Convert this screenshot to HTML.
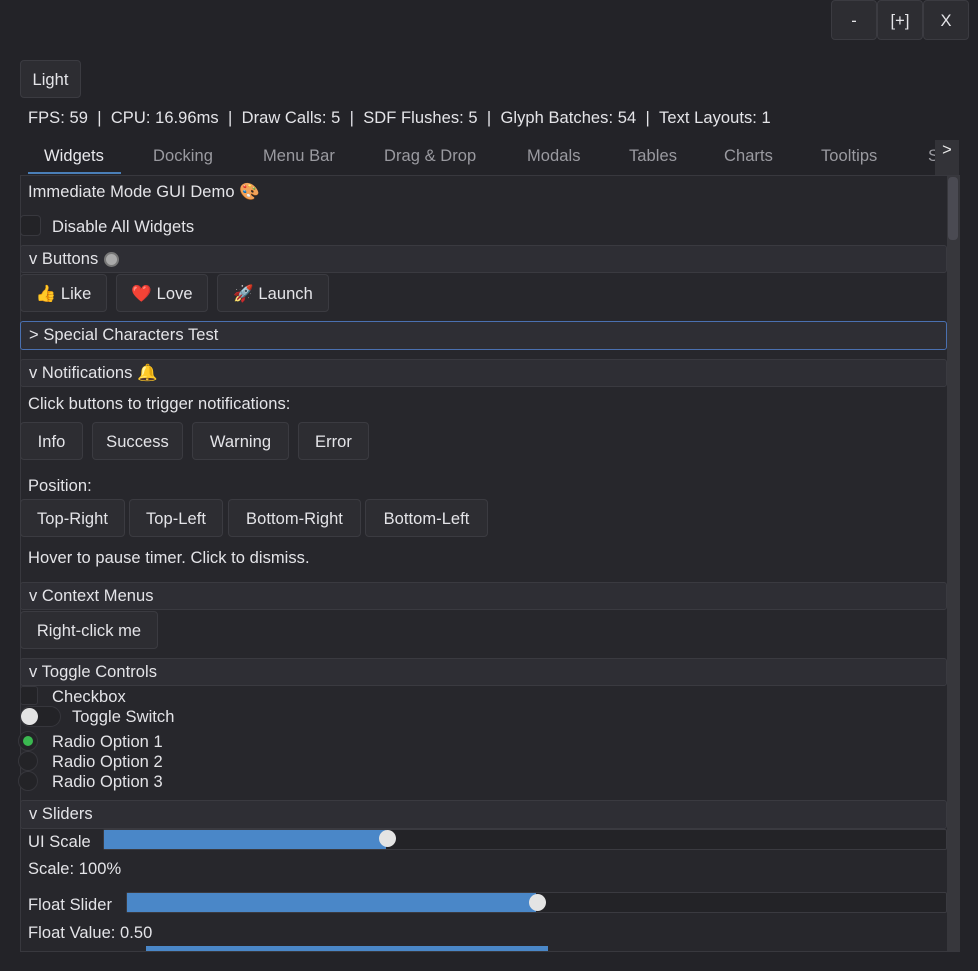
<!DOCTYPE html>
<html><head><meta charset="utf-8"><style>
*{box-sizing:border-box;margin:0;padding:0}
body{width:978px;height:971px;background:#232328;font-family:"Liberation Sans","DejaVu Sans",sans-serif;font-size:16.5px;letter-spacing:0.05px;color:#e4e4e8;position:relative;overflow:hidden}
.a{position:absolute;white-space:nowrap}
.btn{position:absolute;background:#2d2d32;border:1px solid #3b3b41;border-radius:4px;display:flex;align-items:center;justify-content:center;color:#e4e4e8;padding-top:2px}
.t{position:absolute;white-space:nowrap;line-height:20px;margin-top:1px}
.hdr{position:absolute;left:20px;width:927px;background:#2e2e34;border:1px solid #3a3a40;border-radius:3px;padding-left:8px;display:flex;align-items:center}
.tab{position:absolute;top:146px;color:#9a9aa0;line-height:20px}
.circ{position:absolute;width:20px;height:20px;border-radius:50%;border:1px solid #36363c;background:#232327}
.trk{position:absolute;background:#232327;border:1px solid #3a3a40;border-radius:2px}
.fill{position:absolute;background:#4a87c8}
.knob{position:absolute;width:17px;height:17px;border-radius:50%;background:#e4e4e4}
</style></head><body>
<div class="btn" style="left:831px;top:0;width:46px;height:40px">-</div>
<div class="btn" style="left:877px;top:0;width:46px;height:40px">[+]</div>
<div class="btn" style="left:923px;top:0;width:46px;height:40px">X</div>
<div class="btn" style="left:20px;top:60px;width:61px;height:38px">Light</div>
<div class="t" style="left:28px;top:107px">FPS: 59 &nbsp;| &nbsp;CPU: 16.96ms &nbsp;| &nbsp;Draw Calls: 5 &nbsp;| &nbsp;SDF Flushes: 5 &nbsp;| &nbsp;Glyph Batches: 54 &nbsp;| &nbsp;Text Layouts: 1</div>
<div class="tab" style="left:44px;color:#e8e8ec">Widgets</div>
<div class="a" style="left:28px;top:172px;width:93px;height:2px;background:#4a7fb8"></div>
<div class="tab" style="left:153px">Docking</div>
<div class="tab" style="left:263px">Menu Bar</div>
<div class="tab" style="left:384px">Drag &amp; Drop</div>
<div class="tab" style="left:527px">Modals</div>
<div class="tab" style="left:629px">Tables</div>
<div class="tab" style="left:724px">Charts</div>
<div class="tab" style="left:821px">Tooltips</div>
<div class="tab" style="left:928px">S</div>
<div class="a" style="left:935px;top:140px;width:24px;height:36px;background:#333338;color:#e8e8e8;text-align:center;line-height:20px">&gt;</div>
<div class="a" style="left:20px;top:175px;width:940px;height:777px;background:#27272c;border:1px solid #38383e"></div>
<div class="a" style="left:947px;top:176px;width:13px;height:775px;background:#37373c"></div>
<div class="a" style="left:948px;top:177px;width:10px;height:63px;background:#4a4a52;border-radius:4px"></div>
<div class="t" style="left:28px;top:181px">Immediate Mode GUI Demo 🎨</div>
<div class="a" style="left:20px;top:215px;width:21px;height:21px;border:1px solid #38383e;border-radius:4px;background:#232327"></div>
<div class="t" style="left:52px;top:216px">Disable All Widgets</div>
<div class="hdr" style="top:245px;height:28px">v Buttons <span style="display:inline-block;width:15px;height:15px;border-radius:50%;background:#aaa;border:2px solid #777;margin-left:6px"></span></div>
<div class="btn" style="left:20px;top:274px;width:87px;height:38px">👍 Like</div>
<div class="btn" style="left:116px;top:274px;width:92px;height:38px">❤️ Love</div>
<div class="btn" style="left:217px;top:274px;width:112px;height:38px">🚀 Launch</div>
<div class="hdr" style="top:321px;height:29px;border-color:#4a70b0">&gt; Special Characters Test</div>
<div class="hdr" style="top:359px;height:28px">v Notifications 🔔</div>
<div class="t" style="left:28px;top:393px">Click buttons to trigger notifications:</div>
<div class="btn" style="left:20px;top:422px;width:63px;height:38px">Info</div>
<div class="btn" style="left:92px;top:422px;width:91px;height:38px">Success</div>
<div class="btn" style="left:192px;top:422px;width:97px;height:38px">Warning</div>
<div class="btn" style="left:298px;top:422px;width:71px;height:38px">Error</div>
<div class="t" style="left:28px;top:475px">Position:</div>
<div class="btn" style="left:20px;top:499px;width:105px;height:38px">Top-Right</div>
<div class="btn" style="left:129px;top:499px;width:94px;height:38px">Top-Left</div>
<div class="btn" style="left:228px;top:499px;width:133px;height:38px">Bottom-Right</div>
<div class="btn" style="left:365px;top:499px;width:123px;height:38px">Bottom-Left</div>
<div class="t" style="left:28px;top:547px">Hover to pause timer. Click to dismiss.</div>
<div class="hdr" style="top:582px;height:28px">v Context Menus</div>
<div class="btn" style="left:20px;top:611px;width:138px;height:38px">Right-click me</div>
<div class="hdr" style="top:658px;height:28px">v Toggle Controls</div>
<div class="a" style="left:20px;top:686px;width:18px;height:19px;border:1px solid #36363c;border-radius:3px;background:#232327"></div>
<div class="t" style="left:52px;top:686px">Checkbox</div>
<div class="a" style="left:20px;top:706px;width:41px;height:21px;border:1px solid #36363c;border-radius:11px;background:#232327"></div>
<div class="knob" style="left:21px;top:708px"></div>
<div class="t" style="left:72px;top:706px">Toggle Switch</div>
<div class="circ" style="left:18px;top:731px"></div>
<div class="a" style="left:23px;top:736px;width:10px;height:10px;border-radius:50%;background:#3ab850"></div>
<div class="t" style="left:52px;top:731px">Radio Option 1</div>
<div class="circ" style="left:18px;top:751px"></div>
<div class="t" style="left:52px;top:751px">Radio Option 2</div>
<div class="circ" style="left:18px;top:771px"></div>
<div class="t" style="left:52px;top:771px">Radio Option 3</div>
<div class="hdr" style="top:800px;height:29px">v Sliders</div>
<div class="t" style="left:28px;top:831px">UI Scale</div>
<div class="trk" style="left:103px;top:829px;width:844px;height:21px"></div>
<div class="fill" style="left:104px;top:830px;width:282px;height:19px"></div>
<div class="knob" style="left:379px;top:830px"></div>
<div class="t" style="left:28px;top:858px">Scale: 100%</div>
<div class="t" style="left:28px;top:894px">Float Slider</div>
<div class="trk" style="left:126px;top:892px;width:821px;height:21px"></div>
<div class="fill" style="left:127px;top:893px;width:409px;height:19px"></div>
<div class="knob" style="left:529px;top:894px"></div>
<div class="t" style="left:28px;top:922px">Float Value: 0.50</div>
<div class="fill" style="left:146px;top:946px;width:402px;height:5px"></div>
</body></html>
